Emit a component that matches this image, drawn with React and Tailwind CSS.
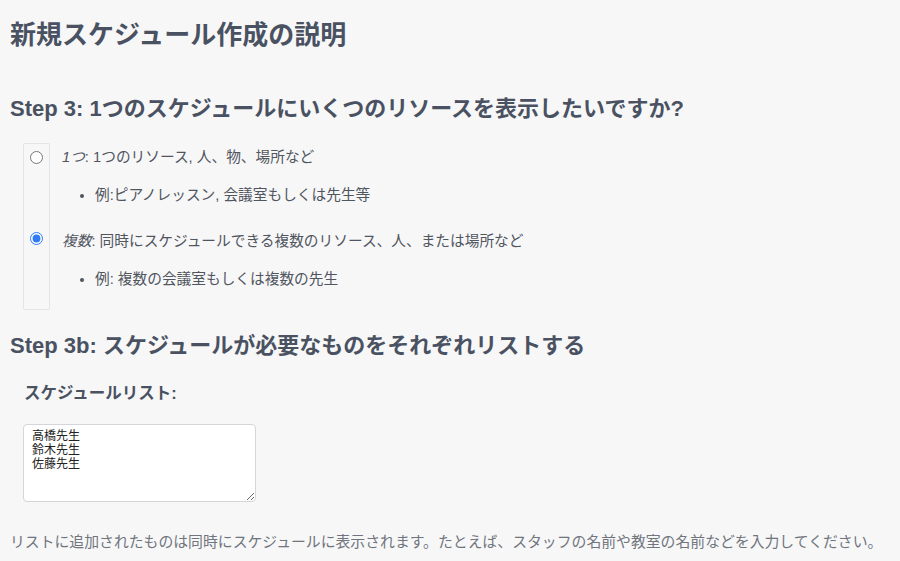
import React from 'react'

const font = { fontFamily: '"Liberation Sans", "Noto Sans CJK JP", sans-serif' }

function OptionRow({ first, last, checked, radioTop, label, desc, example }) {
  return (
    <div className="flex">
      <div
        className={
          'w-[27px] shrink-0 flex justify-center border-x border-[#e2e4e7] ' +
          (first ? 'border-t rounded-t-[2px]' : '') +
          (last ? 'border-b rounded-b-[2px]' : '')
        }
      >
        <input
          type="radio"
          name="count"
          defaultChecked={checked}
          className={'m-0 h-[13px] w-[13px] accent-[#2f7bf5] ' + radioTop}
        />
      </div>
      <div className={'pl-[12px] pt-[3px] ' + (last ? 'pb-[20px]' : 'pb-[21px]')}>
        <p className="text-[14.7px] leading-[22px] text-[#50555e]">
          <em>{label}</em>: {desc}
        </p>
        <ul className="list-disc pl-[33px] mt-[16px] text-[14.7px] leading-[22px] text-[#50555e]">
          <li>{example}</li>
        </ul>
      </div>
    </div>
  )
}

export default function App() {
  return (
    <div className="min-h-[561px] bg-[#f7f7f8] px-[10px] pt-[20px]" style={font}>
      <h1 className="text-[26px] leading-[31px] font-bold text-[#4a5262]">新規スケジュール作成の説明</h1>

      <h3 className="mt-[44px] text-[22px] leading-[27px] font-bold text-[#4a5262]">
        Step 3: 1つのスケジュールにいくつのリソースを表示したいですか?
      </h3>

      <div className="ml-[13px] mt-[21px]">
        <OptionRow
          first
          radioTop="mt-[7px]"
          label="1つ"
          desc="1つのリソース, 人、物、場所など"
          example="例:ピアノレッスン, 会議室もしくは先生等"
        />
        <OptionRow
          last
          checked
          radioTop="mt-[5px]"
          label="複数"
          desc="同時にスケジュールできる複数のリソース、人、または場所など"
          example="例: 複数の会議室もしくは複数の先生"
        />
      </div>

      <h3 className="mt-[22px] text-[22px] leading-[27px] font-bold text-[#4a5262]">
        Step 3b: スケジュールが必要なものをそれぞれリストする
      </h3>

      <label className="block ml-[14px] mt-[24px] text-[16.5px] leading-[20px] font-bold text-[#4a5262]">
        スケジュールリスト:
      </label>

      <textarea
        className="block ml-[13px] mt-[21px] w-[233px] h-[78px] rounded-[4px] border border-[#d4d6da] bg-white pl-[8px] pt-[4px] text-[12px] leading-[14px] text-[#222] outline-none"
        defaultValue={'高橋先生\n鈴木先生\n佐藤先生'}
      />

      <p className="mt-[29px] text-[14.85px] leading-[22px] text-[#70757d]">
        リストに追加されたものは同時にスケジュールに表示されます。たとえば、スタッフの名前や教室の名前などを入力してください。
      </p>
    </div>
  )
}
